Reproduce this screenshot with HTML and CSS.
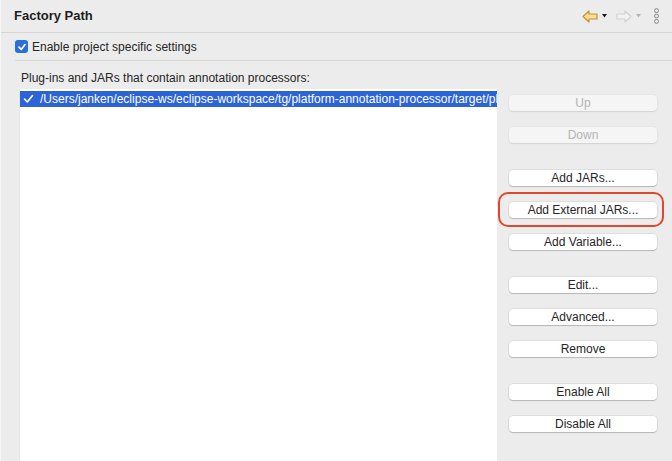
FILE: index.html
```html
<!DOCTYPE html>
<html>
<head>
<meta charset="utf-8">
<link rel="stylesheet" href="styles.css">
</head>
<body>
<div class="page">
  <header class="titlebar">
    <h1 class="title">Factory Path</h1>
    <div class="nav">
      <svg class="arrow" width="16" height="13" viewBox="0 0 16 13">
        <path d="M1 6.5 L7 1 L7 4 L15 4 L15 9 L7 9 L7 12 Z" fill="#f9dca0" stroke="#c98f2a" stroke-width="1.2" stroke-linejoin="round"/>
      </svg>
      <svg class="drop" width="5" height="4" viewBox="0 0 5 4"><path d="M0 0 L5 0 L2.5 3.5 Z" fill="#1a1a1a"/></svg>
      <svg class="arrow fwd" width="16" height="13" viewBox="0 0 16 13">
        <path d="M15 6.5 L9 1 L9 4 L1 4 L1 9 L9 9 L9 12 Z" fill="#f2f2f2" stroke="#d2d2d2" stroke-width="1.2" stroke-linejoin="round"/>
      </svg>
      <svg class="drop" width="5" height="4" viewBox="0 0 5 4"><path d="M0 0 L5 0 L2.5 3.5 Z" fill="#b5b5b5"/></svg>
      <svg class="more" width="7" height="16" viewBox="0 0 7 16">
        <circle cx="3.5" cy="2.6" r="2" fill="none" stroke="#8a8a8a" stroke-width="1"/>
        <circle cx="3.5" cy="8" r="2" fill="none" stroke="#8a8a8a" stroke-width="1"/>
        <circle cx="3.5" cy="13.4" r="2" fill="none" stroke="#8a8a8a" stroke-width="1"/>
      </svg>
    </div>
  </header>

  <div class="enable-row">
    <span class="checkbox">
      <svg width="10" height="10" viewBox="0 0 10 10"><path d="M2 5.2 L4.2 7.5 L8 2.6" fill="none" stroke="#fff" stroke-width="1.7" stroke-linecap="round" stroke-linejoin="round"/></svg>
    </span>
    <span class="enable-label">Enable project specific settings</span>
  </div>

  <div class="content">
    <div class="list-label">Plug-ins and JARs that contain annotation processors:</div>
    <div class="main">
      <div class="list">
        <div class="row selected">
          <svg class="row-check" width="11" height="10" viewBox="0 0 11 10"><path d="M1.5 5 L4.3 8 L9.5 1.5" fill="none" stroke="#fff" stroke-width="1.6" stroke-linecap="round" stroke-linejoin="round"/></svg>
          <span class="row-text">/Users/janken/eclipse-ws/eclipse-workspace/tg/platform-annotation-processor/target/platform-annotation-processor.jar</span>
        </div>
      </div>
      <div class="buttons">
        <div class="group">
          <button class="btn disabled">Up</button>
          <button class="btn disabled">Down</button>
        </div>
        <div class="group">
          <button class="btn">Add JARs...</button>
          <div class="highlight-wrap">
            <button class="btn">Add External JARs...</button>
            <span class="ring"></span>
          </div>
          <button class="btn">Add Variable...</button>
        </div>
        <div class="group">
          <button class="btn">Edit...</button>
          <button class="btn">Advanced...</button>
          <button class="btn">Remove</button>
        </div>
        <div class="group">
          <button class="btn">Enable All</button>
          <button class="btn">Disable All</button>
        </div>
      </div>
    </div>
  </div>
</div>
</body>
</html>
```

FILE: styles.css
```css
* { box-sizing: border-box; }
html, body {
  margin: 0;
  padding: 0;
  width: 672px;
  height: 461px;
  overflow: hidden;
  background: #ececec;
}
body {
  font-family: "Liberation Sans", Arial, sans-serif;
  font-size: 12px;
  color: #262626;
}
.page {
  height: 461px;
  border-left: 1px solid #f6f6f6;
  display: flex;
  flex-direction: column;
}
.titlebar {
  height: 33px;
  flex: none;
  border-bottom: 1px solid #d6d6d6;
  display: flex;
  align-items: center;
  justify-content: space-between;
  padding: 0 12px 0 13px;
}
.title {
  margin: 0;
  font-size: 13px;
  font-weight: bold;
  color: #1e1e1e;
  position: relative;
  top: -1px;
}
.nav {
  display: flex;
  align-items: center;
}
.arrow { display: block; }
.drop { display: block; margin-left: 4px; margin-right: 9px; }
.more { display: block; margin-left: 3px; }

.enable-row {
  flex: none;
  margin-left: 14px;
  height: 28px;
  border-bottom: 1px solid #d6d6d6;
  display: flex;
  align-items: center;
}
.checkbox {
  width: 13px;
  height: 13px;
  border-radius: 3px;
  background: #2b6fd9;
  display: flex;
  align-items: center;
  justify-content: center;
  margin-right: 4px;
}
.checkbox svg { display: block; }
.enable-label { color: #262626; }

.content {
  flex: 1;
  display: flex;
  flex-direction: column;
  padding-left: 18px;
  min-height: 0;
}
.list-label {
  margin-top: 10px;
  padding-left: 2px;
  line-height: 14px;
}
.main {
  flex: 1;
  display: flex;
  margin-top: 4px;
  min-height: 0;
}
.list {
  width: 478px;
  flex: none;
  background: #fff;
  border-left: 1px solid #e2e2e2;
  padding-top: 2px;
  overflow: hidden;
}
.row {
  height: 16px;
  display: flex;
  align-items: center;
  white-space: nowrap;
  overflow: hidden;
}
.row.selected {
  background: #2c64d8;
  color: #fff;
}
.row-check { margin-left: 3px; margin-right: 6px; flex: none; }
.row-text {
  min-width: 0;
  flex: 1;
  overflow: hidden;
  white-space: nowrap;
}

.buttons {
  margin-left: 12px;
  padding-top: 6px;
  display: flex;
  flex-direction: column;
  gap: 27px;
}
.group {
  display: flex;
  flex-direction: column;
  gap: 16px;
}
.btn {
  display: block;
  width: 148px;
  height: 16px;
  padding: 0;
  border: none;
  border-radius: 4px;
  background: #fff;
  font-family: "Liberation Sans", Arial, sans-serif;
  font-size: 12px;
  color: #262626;
  text-align: center;
  line-height: 16px;
  box-shadow: 0 0 0 0.5px rgba(0,0,0,0.12), 0 1px 1px rgba(0,0,0,0.18);
}
.btn.disabled {
  background: #f5f5f5;
  color: #b4b4b4;
  box-shadow: 0 0 0 0.5px rgba(0,0,0,0.06), 0 1px 1px rgba(0,0,0,0.08);
}
.highlight-wrap { position: relative; }
.ring {
  position: absolute;
  left: -11px;
  top: -10px;
  width: 166px;
  height: 35px;
  border: 2px solid #e0472f;
  border-radius: 10px;
  pointer-events: none;
}
```
